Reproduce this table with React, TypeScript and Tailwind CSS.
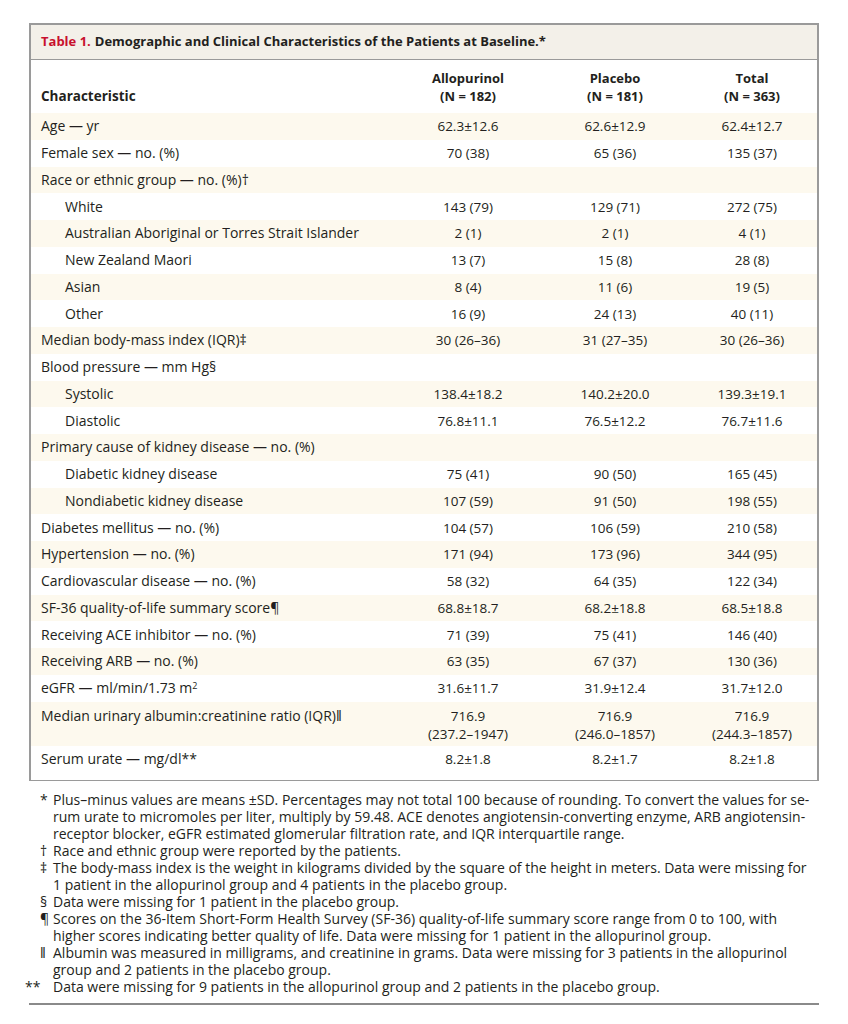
import React from "react";

type Row = {
  label: React.ReactNode;
  values?: [React.ReactNode, React.ReactNode, React.ReactNode];
  indent?: boolean;
  tall?: boolean;
};

const rows: Row[] = [
  { label: "Age — yr", values: ["62.3±12.6", "62.6±12.9", "62.4±12.7"] },
  { label: "Female sex — no. (%)", values: ["70 (38)", "65 (36)", "135 (37)"] },
  { label: "Race or ethnic group — no. (%)†" },
  { label: "White", indent: true, values: ["143 (79)", "129 (71)", "272 (75)"] },
  { label: "Australian Aboriginal or Torres Strait Islander", indent: true, values: ["2 (1)", "2 (1)", "4 (1)"] },
  { label: "New Zealand Maori", indent: true, values: ["13 (7)", "15 (8)", "28 (8)"] },
  { label: "Asian", indent: true, values: ["8 (4)", "11 (6)", "19 (5)"] },
  { label: "Other", indent: true, values: ["16 (9)", "24 (13)", "40 (11)"] },
  { label: "Median body-mass index (IQR)‡", values: ["30 (26–36)", "31 (27–35)", "30 (26–36)"] },
  { label: "Blood pressure — mm Hg§" },
  { label: "Systolic", indent: true, values: ["138.4±18.2", "140.2±20.0", "139.3±19.1"] },
  { label: "Diastolic", indent: true, values: ["76.8±11.1", "76.5±12.2", "76.7±11.6"] },
  { label: "Primary cause of kidney disease — no. (%)" },
  { label: "Diabetic kidney disease", indent: true, values: ["75 (41)", "90 (50)", "165 (45)"] },
  { label: "Nondiabetic kidney disease", indent: true, values: ["107 (59)", "91 (50)", "198 (55)"] },
  { label: "Diabetes mellitus — no. (%)", values: ["104 (57)", "106 (59)", "210 (58)"] },
  { label: "Hypertension — no. (%)", values: ["171 (94)", "173 (96)", "344 (95)"] },
  { label: "Cardiovascular disease — no. (%)", values: ["58 (32)", "64 (35)", "122 (34)"] },
  { label: "SF-36 quality-of-life summary score¶", values: ["68.8±18.7", "68.2±18.8", "68.5±18.8"] },
  { label: "Receiving ACE inhibitor — no. (%)", values: ["71 (39)", "75 (41)", "146 (40)"] },
  { label: "Receiving ARB — no. (%)", values: ["63 (35)", "67 (37)", "130 (36)"] },
  {
    label: (
      <>
        eGFR — ml/min/1.73 m<sup className="text-[9px]">2</sup>
      </>
    ),
    values: ["31.6±11.7", "31.9±12.4", "31.7±12.0"],
  },
  {
    label: "Median urinary albumin:creatinine ratio (IQR)‖",
    tall: true,
    values: [
      <>716.9<br />(237.2–1947)</>,
      <>716.9<br />(246.0–1857)</>,
      <>716.9<br />(244.3–1857)</>,
    ],
  },
  { label: "Serum urate — mg/dl**", values: ["8.2±1.8", "8.2±1.7", "8.2±1.8"] },
];

const notes: { mark: string; lines: string[] }[] = [
  {
    mark: "*",
    lines: [
      "Plus–minus values are means ±SD. Percentages may not total 100 because of rounding. To convert the values for se-",
      "rum urate to micromoles per liter, multiply by 59.48. ACE denotes angiotensin-converting enzyme, ARB angiotensin-",
      "receptor blocker, eGFR estimated glomerular filtration rate, and IQR interquartile range.",
    ],
  },
  { mark: "†", lines: ["Race and ethnic group were reported by the patients."] },
  {
    mark: "‡",
    lines: [
      "The body-mass index is the weight in kilograms divided by the square of the height in meters. Data were missing for",
      "1 patient in the allopurinol group and 4 patients in the placebo group.",
    ],
  },
  { mark: "§", lines: ["Data were missing for 1 patient in the placebo group."] },
  {
    mark: "¶",
    lines: [
      "Scores on the 36-Item Short-Form Health Survey (SF-36) quality-of-life summary score range from 0 to 100, with",
      "higher scores indicating better quality of life. Data were missing for 1 patient in the allopurinol group.",
    ],
  },
  {
    mark: "‖",
    lines: [
      "Albumin was measured in milligrams, and creatinine in grams. Data were missing for 3 patients in the allopurinol",
      "group and 2 patients in the placebo group.",
    ],
  },
  { mark: "**", lines: ["Data were missing for 9 patients in the allopurinol group and 2 patients in the placebo group."] },
];

const cols = "grid grid-cols-[366px_142px_152px_122px]";

export default function App() {
  return (
    <div className="min-h-[1024px] w-[848px] bg-white px-[29px] pt-[23px] font-['Open_Sans',sans-serif] text-[14px] text-[#231f20]">
      <div className="border-2 border-b border-[#9a9a9a] pb-[8px]">
        <div className="flex h-[35px] items-center border-b border-[#9a9a9a] bg-[#f3f0e9] pl-[10px] text-[13px] font-bold">
          <span className="text-[#c8102e]">Table 1.</span>
          <span className="ml-[4px]">Demographic and Clinical Characteristics of the Patients at Baseline.*</span>
        </div>

        <div className={`${cols} h-[53px] items-end pb-[8px] text-[13px] font-bold leading-[18px]`}>
          <div className="pl-[10px] text-[13.5px]">Characteristic</div>
          <div className="text-center">Allopurinol<br />(N = 182)</div>
          <div className="text-center">Placebo<br />(N = 181)</div>
          <div className="text-center">Total<br />(N = 363)</div>
        </div>

        {rows.map((row, i) => (
          <div
            key={i}
            className={`${cols} leading-[18px] ${i % 2 === 0 ? "bg-[#fdf9ee]" : "bg-white"} ${
              row.tall ? "h-[44px] items-start pt-[5px]" : "h-[26.75px] items-center"
            }`}
          >
            <div className={row.indent ? "pl-[34px]" : "pl-[10px]"}>{row.label}</div>
            {row.values?.map((v, j) => (
              <div key={j} className="text-center text-[13.5px]">
                {v}
              </div>
            ))}
          </div>
        ))}
      </div>

      <div className="mt-[10px] leading-[17px]">
        {notes.map((n) => (
          <div key={n.mark} className="flex">
            <div className={`shrink-0 ${n.mark === "**" ? "-ml-[4px] w-[28px]" : "w-[24px] pl-[11px]"}`}>{n.mark}</div>
            <div>
              {n.lines.map((l) => (
                <div key={l} className="whitespace-nowrap">
                  {l}
                </div>
              ))}
            </div>
          </div>
        ))}
      </div>

      <div className="mt-[8px] h-[2px] bg-[#8a8a8a]" />
    </div>
  );
}
